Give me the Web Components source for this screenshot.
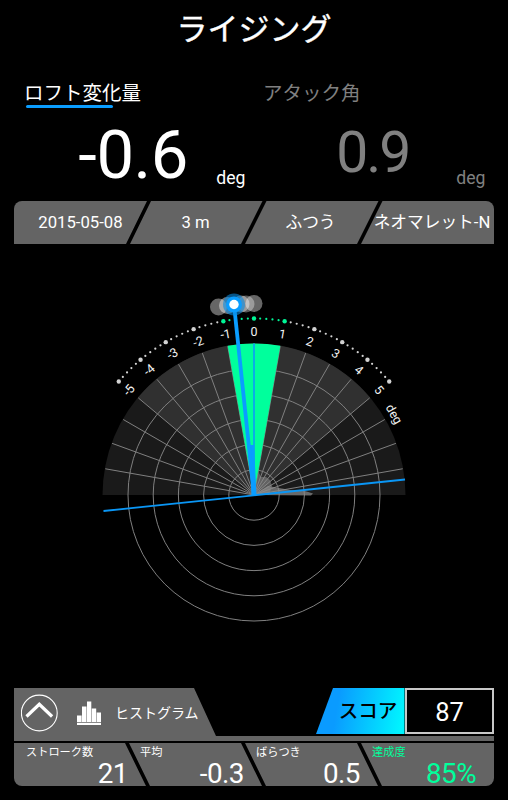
<!DOCTYPE html>
<html lang="ja">
<head>
<meta charset="UTF-8">
<title>ライジング</title>
<style>
  body {
    margin: 0;
    background: #000;
    color: #fff;
    font-family: Roboto, "Noto Sans CJK JP", sans-serif;
  }
</style>
</head>
<body>
<stroke-screen></stroke-screen>

<script>
class MetricValue extends HTMLElement {
  constructor() {
    super();
    this.attachShadow({ mode: 'open' });
  }

  connectedCallback() {
    this.shadowRoot.innerHTML = `
      <style>
        :host {
          display: grid;
          grid-template-rows: 29px 1fr;
          height: 121px;
          color: #808080;
        }
        :host([active]) { color: #fff; }
        .label {
          justify-self: start;
          margin-left: var(--label-x, 9px);
          font-size: 19.5px;
          line-height: 28px;
          height: 25px;
          white-space: nowrap;
        }
        .label::after {
          content: '';
          display: block;
          width: 87px;
          height: 3px;
          margin: -3px 0 0 2px;
          border-radius: 2px;
        }
        :host([active]) .label::after { background: #0a9dff; }
        .row {
          display: flex;
          justify-content: flex-end;
          align-items: flex-start;
          padding-right: 8.5px;
        }
        .num {
          font-size: var(--num-size, 67px);
          line-height: var(--num-line, 93px);
          margin-right: var(--num-gap, 28.5px);
          letter-spacing: var(--num-spacing, -0.5px);
        }
        .unit {
          font-size: 17.6px;
          line-height: 138px;
        }
      </style>
      <div class="label">${this.getAttribute('label')}</div>
      <div class="row">
        <span class="num"><slot></slot></span>
        <span class="unit">deg</span>
      </div>
    `;
  }
}

class InfoBar extends HTMLElement {
  constructor() {
    super();
    this.attachShadow({ mode: 'open' });
    this.shadowRoot.innerHTML = `
      <style>
        :host {
          display: grid;
          grid-template-columns: 133px 97px 133px 110px;
          height: 43px;
          margin: 0 14px;
          border-radius: 8px 8px 0 0;
          background: #646464;
          clip-path: polygon(0 0, 133px 0, 112px 100%, 116px 100%, 137px 0, 248.5px 0, 227px 100%, 231px 100%, 252.5px 0, 364.5px 0, 343px 100%, 347px 100%, 368.5px 0, 480px 0, 480px 100%, 0 100%);
          font-size: 16.7px;
          line-height: 43px;
          white-space: nowrap;
        }
        ::slotted(span) { justify-self: center; }
      </style>
      <slot></slot>
    `;
  }
}

class AngleDial extends HTMLElement {
  constructor() {
    super();
    this.attachShadow({ mode: 'open' });
  }

  connectedCallback() {
    this.shadowRoot.innerHTML = `
      <style>
        :host { display: block; height: 444px; }
        svg { display: block; }
        text { fill: #f2f2f2; font: 12.5px Roboto, sans-serif; text-anchor: middle; }
      </style>
      <svg width="508" height="444" viewBox="0 244 508 444">${this.draw()}</svg>
    `;
  }

  // angle in degrees, clockwise from straight up
  point(angle, radius) {
    const rad = angle * Math.PI / 180;
    return [254 + radius * Math.sin(rad), 495 - radius * Math.cos(rad)];
  }

  wedge(from, to, fill) {
    const r = 151.5;
    return `<path fill="${fill}" d="M254 495L${this.point(from, r)}A${r} ${r} 0 0 1 ${this.point(to, r)}Z"/>`;
  }

  draw() {
    let out = this.wedge(-90, 90, '#1a1a1a') + this.wedge(-50, 50, '#303030');

    out += '<g fill="none" stroke="#808080" stroke-width="1">';
    for (let i = 1; i <= 5; i++) {
      out += `<circle cx="254" cy="495" r="${i * 25.2}"/>`;
    }
    for (let a = -80; a <= 80; a += 10) {
      out += `<path d="M254 495L${this.point(a, 151)}"/>`;
    }
    out += '</g>';
    out += this.wedge(-10, 10, '#00ff9c');

    // stroke distribution
    out += `
      <path fill="#8c8c8c" fill-opacity=".55" d="M254 495L258 471L261 477L266 477L270 480L272 486L269 495Z"/>
      <path fill="#8c8c8c" fill-opacity=".7" d="M254 495L268 486L282 488.500L290 490L305 491L313 493.500L311 495.500Z"/>
    `;

    for (let a = -50; a <= 50; a += 2) {
      const [x, y] = this.point(a, 176.5);
      const color = Math.abs(a) <= 10 ? '#00f596' : '#d2d2d2';
      out += `<circle cx="${x}" cy="${y}" r="${a % 10 ? 1.1 : 2.2}" fill="${color}"/>`;
    }
    for (let n = -5; n <= 5; n++) {
      out += `<text transform="rotate(${n * 10} 254 495)" x="254" y="336">${n}</text>`;
    }
    out += '<text transform="rotate(60 254 495)" x="254" y="337.5">deg</text>';

    // earlier strokes
    for (const [x, y, o] of [[218.5, 307, .4], [227.5, 305.5, .45], [241, 304, .4], [246, 304, .35], [254, 303.5, .4]]) {
      out += `<circle cx="${x}" cy="${y}" r="8.5" fill="#fff" fill-opacity="${o}"/>`;
    }

    out += `
      <path d="M254 343.5V495" stroke="#0aaee6" stroke-width="2"/>
      <path d="M103.500 511L405 479.500" stroke="#0a96f5" stroke-width="1.800"/>
      <path d="M251.500 445L254 495" stroke="#0a9dff" stroke-width="5"/>
      <path d="M234 304.500L254 495" stroke="#0a9dff" stroke-width="3.800"/>
      <circle cx="234" cy="304.500" r="11" fill="#0a8ae0" fill-opacity=".6"/>
      <circle cx="234" cy="304.500" r="8" fill="#0a9dff"/>
      <circle cx="234" cy="304.500" r="4.700" fill="#fff"/>
    `;
    return out;
  }
}

class HistogramTab extends HTMLElement {
  constructor() {
    super();
    this.attachShadow({ mode: 'open' });
    this.shadowRoot.innerHTML = `
      <style>
        :host {
          display: flex;
          align-items: center;
          box-sizing: border-box;
          height: 53px;
          padding: 0 0 4px 7px;
          margin: 0 14px;
          background: #646464;
          clip-path: polygon(0 0, 180px 0, 202px 48px, 480px 48px, 480px 100%, 0 100%);
          font-size: 14px;
        }
        .bars { margin-left: 19px; }
        .label {
          margin-left: 13px;
          padding-bottom: 2px;
        }
      </style>
      <svg width="37" height="38" viewBox="0 0 37 38" fill="none" stroke="#fff">
        <circle cx="18.300" cy="19" r="17.900" stroke-width="1.100"/>
        <path d="M5.500 22.500L18.300 10.300L31.100 22.500" stroke-width="3.200"/>
      </svg>
      <svg class="bars" width="25" height="24" viewBox="0 0 25 24" fill="#fff">
        <path d="M0 14.500h4.600V21H0zM5 5.500h4.500V21H5zM10 .5h4.300V21H10zM14.800 7.500h4.400V21h-4.400zM19.700 11.500h4.300V21h-4.300zM0 21.800h24V24H0z"/>
      </svg>
      <span class="label"><slot></slot></span>
    `;
  }
}

class ScoreBadge extends HTMLElement {
  constructor() {
    super();
    this.attachShadow({ mode: 'open' });
    this.shadowRoot.innerHTML = `
      <style>
        :host {
          display: grid;
          grid-template-columns: 89px 89px;
          height: 46px;
          line-height: 48px;
          text-align: center;
        }
        .label {
          box-sizing: border-box;
          height: 46px;
          padding-left: 15px;
          background: linear-gradient(100deg, #0a9bff 25%, #00f5ff 95%);
          clip-path: polygon(17px 0, 88.5px 0, 88.5px 100%, 0 100%);
          color: #000;
          font-size: 19.5px;
          font-weight: 500;
        }
        .value {
          box-sizing: border-box;
          height: 46px;
          border: 2px solid #c8c8c8;
          line-height: 45px;
          font-size: 25.5px;
        }
      </style>
      <div class="label">スコア</div>
      <div class="value"><slot></slot></div>
    `;
  }
}

class StatCell extends HTMLElement {
  constructor() {
    super();
    this.attachShadow({ mode: 'open' });
  }

  connectedCallback() {
    this.shadowRoot.innerHTML = `
      <style>
        :host {
          display: grid;
          grid-template-rows: 15px 27px;
          white-space: nowrap;
        }
        :host([good]) { color: #00ff9c; }
        .label {
          font-size: 11.2px;
          line-height: 19px;
        }
        .value {
          justify-self: end;
          font-size: 27.8px;
          line-height: 31px;
          letter-spacing: -0.5px;
        }
      </style>
      <span class="label">${this.getAttribute('label')}</span>
      <span class="value"><slot></slot></span>
    `;
  }
}

class StatBar extends HTMLElement {
  constructor() {
    super();
    this.attachShadow({ mode: 'open' });
    this.shadowRoot.innerHTML = `
      <style>
        :host {
          display: grid;
          grid-template-columns: 102px 104px 104px 104px;
          column-gap: 12px;
          height: 43px;
          margin: 2px 14px 0;
          padding-left: 12px;
          background: #646464;
          border-radius: 0 0 8px 8px;
          clip-path: polygon(0 0, 111px 0, 132px 100%, 136px 100%, 115px 0, 227px 0, 248px 100%, 252px 100%, 231px 0, 343px 0, 364px 100%, 368px 100%, 347px 0, 480px 0, 480px 100%, 0 100%);
        }
      </style>
      <slot></slot>
    `;
  }
}

class StrokeScreen extends HTMLElement {
  constructor() {
    super();
    this.attachShadow({ mode: 'open' });
    this.shadowRoot.innerHTML = `
      <style>
        :host {
          display: block;
          width: 508px;
          height: 800px;
          overflow: hidden;
          background: #000;
        }
        h1 {
          margin: 0;
          height: 80px;
          font-size: 31px;
          font-weight: 400;
          line-height: 59px;
          text-align: center;
          -webkit-text-stroke: 0.4px;
        }
        .metrics {
          display: grid;
          grid-template-columns: 239px 240px;
          margin-left: 15px;
        }
        .second {
          --label-x: 9px;
          --num-size: 57px;
          --num-line: 88px;
          --num-gap: 47px;
          --num-spacing: -2px;
        }
        .bottom { display: grid; }
        histogram-tab, score-badge { grid-area: 1 / 1; }
        score-badge { justify-self: end; margin-right: 14px; }
      </style>
      <h1>ライジング</h1>
      <div class="metrics">
        <metric-value label="ロフト変化量" active>-0.6</metric-value>
        <metric-value class="second" label="アタック角">0.9</metric-value>
      </div>
      <info-bar>
        <span>2015-05-08</span>
        <span>3 m</span>
        <span>ふつう</span>
        <span>ネオマレット-N</span>
      </info-bar>
      <angle-dial></angle-dial>
      <div class="bottom">
        <histogram-tab>ヒストグラム</histogram-tab>
        <score-badge>87</score-badge>
      </div>
      <stat-bar>
        <stat-cell label="ストローク数">21</stat-cell>
        <stat-cell label="平均">-0.3</stat-cell>
        <stat-cell label="ばらつき">0.5</stat-cell>
        <stat-cell label="達成度" good>85%</stat-cell>
      </stat-bar>
    `;
  }
}

customElements.define('metric-value', MetricValue);
customElements.define('info-bar', InfoBar);
customElements.define('angle-dial', AngleDial);
customElements.define('histogram-tab', HistogramTab);
customElements.define('score-badge', ScoreBadge);
customElements.define('stat-cell', StatCell);
customElements.define('stat-bar', StatBar);
customElements.define('stroke-screen', StrokeScreen);
</script>
</body>
</html>
